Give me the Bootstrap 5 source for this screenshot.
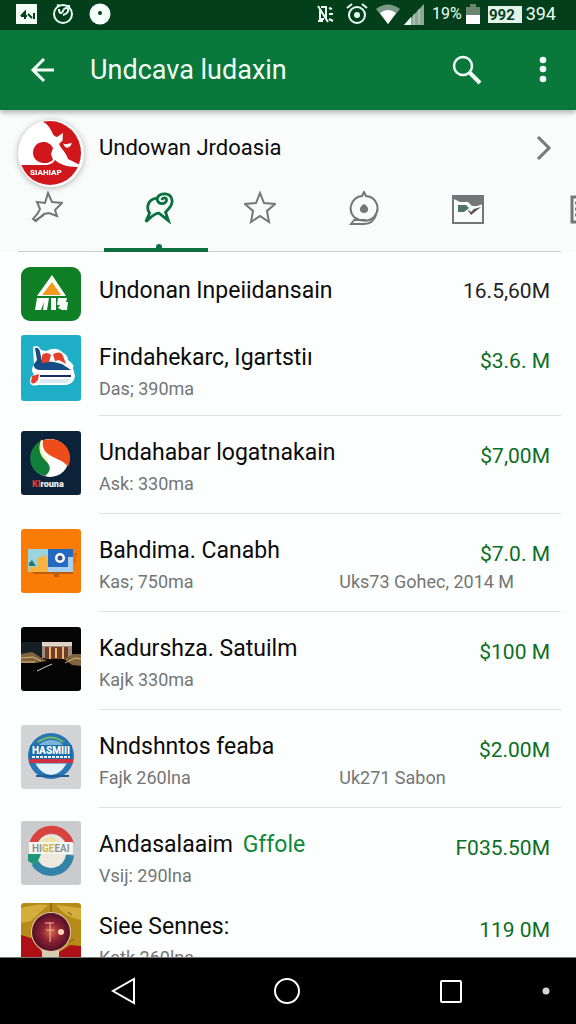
<!DOCTYPE html>
<html lang="id">
<head>
<meta charset="utf-8">
<meta name="viewport" content="width=device-width, initial-scale=1">
<title>Undcava ludaxin</title>
<link href="https://cdn.jsdelivr.net/npm/bootstrap@5.3.0/dist/css/bootstrap.min.css" rel="stylesheet">
<style>
  body { font-family: Roboto, "Liberation Sans", sans-serif; color: #0b0b0b; background: #fdfefe; }
  svg { display: block; flex: none; }
  svg text { font-family: Roboto, "Liberation Sans", sans-serif; }
  .status-strip { height: 30px; background: #033f1b; color: #eafff2; font-size: 18px; line-height: 28px; padding: 0 20px 2px 16px; }
  .status-strip .charge { font-size: 16px; }
  .app-head { height: 80px; background: #0b783b; color: #f2fff6; padding: 0 20px 0 28px; box-shadow: 0 2px 6px rgba(0,0,0,.35); z-index: 2; }
  .app-title { font-size: 27px; line-height: 36px; }
  .bare { background: none; border: 0; padding: 0; color: inherit; }
  .profile-zone { background: #fafbfb; }
  .profile-link { padding: 10px 24px 0 18px; color: inherit; text-decoration: none; }
  .profile-name { font-size: 22px; line-height: 56px; padding-left: 15px; }
  .avatar { filter: drop-shadow(0 1px 3px rgba(0,0,0,.3)); }
  .tab-strip { height: 65px; overflow: hidden; }
  .tab-strip::after { content: ""; position: absolute; left: 18px; right: 15px; bottom: 0; height: 1px; background: #c9cdcd; }
  .tab-strip .nav-link { flex: none; width: 104px; padding: 4px 0 0; color: #747777; background: none; border: 0; display: flex; justify-content: center; align-items: flex-start; border-radius: 0; }
  .tab-strip .nav-link:first-child { padding-right: 10px; }
  .tab-strip .nav-link:last-child { justify-content: flex-start; padding-left: 50px; }
  .tab-strip .nav-link.active { color: #0a7040; border-bottom: 4px solid #0a7040; padding-left: 6px; position: relative; z-index: 1; }
  .tab-strip .nav-link.active::after { content: ""; position: absolute; bottom: -2px; left: 50%; width: 6px; height: 6px; border-radius: 50%; background: #0a7040; }
  .entries { min-height: 0; flex: 1 1 0; }
  .entry { padding: 0 15px 0 21px; }
  .entry-art { margin-top: 15px; width: 60px; }
  .entry-body { margin-left: 18px; padding-top: 21px; min-height: 98px; border-bottom: 1px solid #dfe2e2; }
  .entry-first .entry-body { min-height: 69px; padding-top: 23px; border: 0; }
  .entry-second .entry-body { min-height: 95px; }
  .entry-second .entry-art { margin-top: 14px; }
  .entry-open .entry-body { min-height: 80px; border: 0; }
  .entry-open .entry-art { margin-top: 13px; }
  .entry-name { font-size: 23px; line-height: 32px; margin: 0; font-weight: 400; white-space: nowrap; }
  .entry-sum { font-size: 21px; line-height: 27px; padding: 6px 11px 0 0; color: #0b6e24; white-space: nowrap; }
  .entry-first .entry-sum { color: #222; padding-top: 3px; }
  .entry-note { font-size: 18px; line-height: 28px; color: #737676; white-space: nowrap; }
  .entry-note > :first-child { width: 52%; }
  .tag-green { color: #0a8a3a; }
  .system-nav { height: 67px; background: #000; color: #fff; padding: 0 16px 0 41px; border-top: 1px solid #777; }
  .system-nav .bare { flex: 6 1 0; display: flex; justify-content: center; }
  .system-nav .bare:last-child { flex-grow: 1; }
</style>
</head>
<body>
<div class="d-flex flex-column vh-100 overflow-hidden">

  <div class="status-strip d-flex align-items-center justify-content-between">
    <div class="d-flex align-items-center gap-3">
      <svg width="21" height="20" viewBox="0 0 21 20"><path fill="#f4fff8" d="M0 0h21v20H0z"/><path d="M5 12l4-4v7M5 12h6M12 10l4 4M18 9v6" fill="none" stroke="#033f1b" stroke-width="2"/></svg>
      <svg width="20" height="20" viewBox="0 0 20 20" fill="none" stroke="#eafff2" stroke-width="2"><circle cx="10" cy="10" r="9"/><path d="M6 5c0 5 3 5 4 2s4-4 5-2-1 5-5 6M4 1l3 1M14 2l3 0"/></svg>
      <svg width="22" height="22" viewBox="0 0 22 22"><circle cx="11" cy="11" r="10.500" fill="#f7fffa"/><circle cx="11" cy="10" r="2" fill="#033f1b"/></svg>
    </div>
    <div class="d-flex align-items-center gap-1">
      <svg class="me-2" width="18" height="20" viewBox="0 0 18 20" fill="none" stroke="#eafff2" stroke-width="2"><path d="M2 2l10 16M4 5v10h4M5 3h5v13M2 17h5M13 4l3 1M13 10h4M13 15l4 2"/></svg>
      <svg class="me-1" width="22" height="22" viewBox="0 0 22 22" fill="none" stroke="#eafff2" stroke-width="2"><circle cx="11" cy="12" r="8"/><path d="M1 5l5-4M21 5l-5-4"/><circle cx="11" cy="12" r="2" fill="#eafff2"/></svg>
      <svg width="24" height="20" viewBox="0 0 24 20"><path fill="#7b9b86" d="M0 5q12-9 24 0L12 20z"/><path fill="#fff" d="M4 9q8-6 16 0l-8 11z"/></svg>
      <svg width="20" height="21" viewBox="0 0 20 21"><path fill="#8ba795" d="M20 0v21H0z"/><path fill="#eafff2" d="M7 13v8H0z"/><path d="M10 10v11M15 5v16" stroke="#c6d9cc"/></svg>
      <span class="charge ms-1">19%</span>
      <svg width="14" height="20" viewBox="0 0 14 20"><path fill="#69876f" d="M4 0h6v3h4v8H0V3h4z"/><path fill="#fff" d="M0 11h14v9H0z"/></svg>
      <svg class="ms-1" width="34" height="17" viewBox="0 0 34 17"><path fill="#e3f2e8" d="M0 0h34v17H0z"/><text x="1" y="14" font-size="15" font-weight="700" fill="#033f1b">992</text></svg>
      <span>394</span>
    </div>
  </div>

  <header class="app-head d-flex align-items-center position-relative">
    <button class="bare" type="button" aria-label="Back"><svg width="30" height="28" viewBox="0 0 30 28" fill="none" stroke="currentColor" stroke-width="3"><path d="M26 14H5M16 3L5 14l11 11"/></svg></button>
    <h1 class="app-title fw-normal mb-0 flex-grow-1 ps-2 ms-4">Undcava ludaxin</h1>
    <button class="bare" type="button" aria-label="Search"><svg width="30" height="30" viewBox="0 0 30 30" fill="none" stroke="currentColor"><circle cx="11" cy="11" r="9" stroke-width="2.500"/><path d="M17 17l11 11" stroke-width="4"/></svg></button>
    <button class="bare ms-5" type="button" aria-label="More"><svg width="26" height="28" viewBox="0 0 26 28" fill="currentColor"><circle cx="13" cy="4" r="3.300"/><circle cx="13" cy="13" r="3.300"/><circle cx="13" cy="23" r="3.300"/></svg></button>
  </header>

  <section class="profile-zone">
    <a class="profile-link d-flex align-items-start" href="#profile">
      <svg class="avatar" width="66" height="67" viewBox="0 0 66 67"><defs><clipPath id="round"><ellipse cx="32" cy="33" rx="31" ry="32"/></clipPath></defs><ellipse cx="33" cy="33.500" rx="33" ry="33.500" fill="#fff"/>
        <g clip-path="url(#round)"><path fill="#cf171c" d="M20 0c8 2 11 6 14 12 1 3 2 4 5 5l6-4c-1 9 0 12 4 11l5-1-1 2c-3 5-8 3-8-5l-4 4c2 5 7 8 9 15l16 8V0z"/><path fill="#cf171c" d="M35 40c-6 6-20 3-20-7 0-12 15-15 20-5l-2 6z"/><path fill="#cf171c" d="M0 45h29q6-1 8-5c8 7 17 7 29 7v20H0z"/></g>
        <text x="12" y="55" font-size="8" font-weight="900" fill="#fff">SIAHIAP</text></svg>
      <span class="profile-name flex-grow-1">Undowan Jrdoasia</span>
      <svg class="mt-3" width="16" height="24" viewBox="0 0 16 24" fill="none" stroke="#777" stroke-width="3"><path d="M2 1l11 11L2 23"/></svg>
    </a>
    <nav class="tab-strip nav flex-nowrap position-relative" aria-label="Sections">
      <button class="nav-link" type="button" aria-label="Pinned"><svg width="32" height="33" viewBox="0 0 32 33" fill="none" stroke="currentColor" stroke-width="2"><path d="M17 2l4 9 10 1-7 7 2 6-8-3-5 1-8 7-3-2 5-6 2-4-3-7 8 1z"/><path d="M3 30l10-6"/></svg></button>
      <button class="nav-link active" type="button" aria-label="Featured"><svg width="32" height="33" viewBox="0 0 34 34" fill="none" stroke="currentColor" stroke-width="3"><path d="M3 32l4-9C3 17 5 8 15 7c3-6 15-7 16 3 0 6-4 8-7 12l3 9-10-8c-5 0-8 4-14 9z"/><path d="M15 7c0 8 10 7 10 2 0-3-4-3-5 0"/></svg></button>
      <button class="nav-link" type="button" aria-label="Favourites"><svg width="32" height="33" viewBox="0 0 32 33" fill="none" stroke="currentColor" stroke-width="2"><path d="M16 2l4 10 11 1-8 7 2 11-9-6-9 6 2-11-8-7 11-1z"/></svg></button>
      <button class="nav-link" type="button" aria-label="Places"><svg width="30" height="34" viewBox="0 0 30 34" fill="none" stroke="currentColor" stroke-width="2"><path d="M5 26C-2 18 3 6 13 5l2-4 2 4c11 1 15 13 8 21-5 5-13 5-20 0z"/><path d="M6 28l-4 5h13c6 0 10-3 12-9M5 29h12"/><path d="M15 13c6 3 5 9 0 9s-6-6 0-9z" fill="currentColor" stroke="none"/></svg></button>
      <button class="nav-link" type="button" aria-label="Charts"><svg class="mt-1" width="32" height="29" viewBox="0 0 32 29"><path fill="none" stroke="currentColor" stroke-width="2" d="M1 1h30v27H1z"/><path fill="currentColor" d="M1 1h30v8l-6 2-5 0-4-4H8L2 4z"/><path fill="#4c7663" d="M6 10h8l3 3-5 4H6z"/><path fill="#555" d="M15 14l4 6 10-8-7 2-3 3z"/></svg></button>
      <button class="nav-link" type="button" aria-label="List"><svg class="mt-1" width="30" height="29" viewBox="0 0 30 29" fill="none" stroke="currentColor" stroke-width="3"><path d="M2 2h26v25H2zM5 8h18M5 14h18M5 20h18"/></svg></button>
    </nav>
  </section>

  <main class="entries overflow-hidden">
    <article class="entry entry-first d-flex align-items-start">
      <svg class="entry-art" height="54" viewBox="0 0 60 54"><rect width="60" height="54" rx="9" fill="#0e7f24"/><path fill="#fff" d="M31 8l14 21H16z"/><path fill="#f29a1d" d="M31 15l9 13H21z"/><path fill="#fff" d="M16 31h12l-2 12h-4l1-8-3 8h-6zM30 31h5v12h-5zM37 31h9l-1 4h2l-1 8h-5l-4-2 2-3h-3z"/></svg>
      <div class="entry-body flex-grow-1"><div class="d-flex justify-content-between"><h2 class="entry-name">Undonan Inpeiidansain</h2><span class="entry-sum">16.5,60M</span></div></div>
    </article>
    <article class="entry entry-second d-flex align-items-start">
      <svg class="entry-art" height="66" viewBox="0 0 60 66"><rect width="60" height="66" rx="3" fill="#1eaec5"/><path fill="#fff" d="M12 12q5-3 8 3l5 1q10-5 16 1 6 3 6 8 7 5 5 8l2 8q-1 8-9 9H17q-8 2-8-4 0-5 4-6-4-6 0-10z"/><path fill="#174b86" d="M14 13q4-1 5 4l2 9 12 1 8 2 9 6H18q-6-1-5-6l3-4z"/><path fill="#e2402b" d="M21 20q5-4 9 0l-2 7-7 1zM32 19q8-4 10 2l3 8-7-4-4 1zM11 41l7-2-1 6q-5 6-7 2z"/><path fill="#182c67" d="M19 40h31v2H19z"/><path fill="#dce9f1" d="M19 44h31q-2 4-6 4H18z"/></svg>
      <div class="entry-body flex-grow-1"><div class="d-flex justify-content-between"><h2 class="entry-name">Findahekarc, Igartstiı</h2><span class="entry-sum">$3.6. M</span></div><div class="entry-note d-flex"><span>Das; 390ma</span></div></div>
    </article>
    <article class="entry d-flex align-items-start">
      <svg class="entry-art" height="64" viewBox="0 0 60 64"><rect width="60" height="64" rx="3" fill="#0b2238"/><circle cx="29" cy="27" r="19" fill="#fff"/><path fill="#12803b" d="M20 10q-4 12 5 20 8 8-1 15C5 41 5 17 20 10z"/><path fill="#ee4d1b" d="M22 9c22-5 32 14 25 27-6-11-28-8-25-27z"/><path d="M21 9q-5 13 6 21" fill="none" stroke="#eef3a8" stroke-width="2"/><text x="11" y="56" font-size="9" font-weight="900" fill="#f2f6f8"><tspan fill="#e83a32">KI</tspan>rouna</text></svg>
      <div class="entry-body flex-grow-1"><div class="d-flex justify-content-between"><h2 class="entry-name">Undahabar logatnakain</h2><span class="entry-sum">$7,00M</span></div><div class="entry-note d-flex"><span>Ask: 330ma</span></div></div>
    </article>
    <article class="entry d-flex align-items-start">
      <svg class="entry-art" height="64" viewBox="0 0 60 64"><rect width="60" height="64" rx="3" fill="#f97c06"/><path fill="#bd5d10" d="M10 43h42v2H38v3h-5v-3H14z"/><path fill="#9cd3dc" d="M7 20h22v23H7z"/><path fill="#f8b33e" d="M17 29l8-3 3 10v7H8v-5h8z"/><path fill="#287a70" d="M8 34l3-3 4 6H8z"/><path fill="#256ac1" d="M27 20h25v23H27z"/><path fill="#a9d0ee" d="M27 38h20V28h5v15H27z"/><circle cx="39" cy="29" r="5" fill="#fff"/><circle cx="39" cy="29" r="2.500" fill="#34568a"/><path stroke="#c65c12" d="M54 24v10M52 25h5"/></svg>
      <div class="entry-body flex-grow-1"><div class="d-flex justify-content-between"><h2 class="entry-name">Bahdima. Canabh</h2><span class="entry-sum">$7.0. M</span></div><div class="entry-note d-flex"><span>Kas; 750ma</span><span>Uks73 Gohec, 2014 M</span></div></div>
    </article>
    <article class="entry d-flex align-items-start">
      <svg class="entry-art" height="64" viewBox="0 0 60 64"><rect width="60" height="64" rx="3" fill="#050505"/><path fill="#142023" d="M0 15h22v14H0z"/><path fill="#9c8c7c" d="M21 15h30v16H21z"/><path fill="#e0d5c7" d="M21 15h30v4H21z"/><path fill="#713e25" d="M24 20h23v12H24z"/><path stroke="#edb779" stroke-width="2" d="M29 20v12M35 21v10M42 20v12"/><path fill="#806440" d="M0 27l11-2 10 6 5 3-12 2H0zM43 32l9-5h8v12l-9-1z"/><path d="M0 31l12-1 8 4M44 36l10-5 6 1M0 35h14" fill="none" stroke="#d9b77a"/><path d="M16 44q8-4 15-7" fill="none" stroke="#d8d5ca"/></svg>
      <div class="entry-body flex-grow-1"><div class="d-flex justify-content-between"><h2 class="entry-name">Kadurshza. Satuilm</h2><span class="entry-sum">$100 M</span></div><div class="entry-note d-flex"><span>Kajk 330ma</span></div></div>
    </article>
    <article class="entry d-flex align-items-start">
      <svg class="entry-art" height="64" viewBox="0 0 60 64"><rect width="60" height="64" rx="3" fill="#d2d3d5"/><circle cx="30" cy="31" r="23" fill="#2976b4"/><circle cx="30" cy="32" r="17" fill="#7bb4da"/><path fill="#176caa" d="M9 20h42v15H9z"/><path d="M17 17q13-9 25 0" fill="none" stroke="#79b960" stroke-width="2"/><path fill="#d53040" d="M8 34h44v4H8z"/><path fill="#e6f2fb" d="M15 39h30q-6 11-15 11T15 39z"/><text x="11" y="29" font-size="10" font-weight="900" fill="#fff">HASMIII</text><path d="M11 32h38" stroke="#e5f4ff" stroke-width="2" stroke-dasharray="3 1"/><path d="M15 51h33" stroke="#225c92" stroke-width="2"/></svg>
      <div class="entry-body flex-grow-1"><div class="d-flex justify-content-between"><h2 class="entry-name">Nndshntos feaba</h2><span class="entry-sum">$2.00M</span></div><div class="entry-note d-flex"><span>Fajk 260lna</span><span>Uk271 Sabon</span></div></div>
    </article>
    <article class="entry entry-open d-flex align-items-start">
      <svg class="entry-art" height="64" viewBox="0 0 60 64"><rect width="60" height="64" rx="3" fill="#cacbcd"/><circle cx="30" cy="31" r="17" fill="#eee9df"/><path d="M12 24a19 19 0 0 1 37-1" fill="none" stroke="#d9433d" stroke-width="8"/><path d="M49 34a19 19 0 0 1-35 8" fill="none" stroke="#3484aa" stroke-width="8"/><path fill="#f4f4f1" d="M8 21h44v12H8z"/><path fill="#f1dfaa" d="M20 21q9-11 18 0z"/><path fill="#209779" d="M7 33h13l-5 12-8-5z"/><text x="11" y="31" font-size="10" font-weight="700" fill="#8c9496">HI<tspan fill="#d0b83d">GE</tspan>EAI</text></svg>
      <div class="entry-body flex-grow-1"><div class="d-flex justify-content-between"><h2 class="entry-name">Andasalaaim <span class="tag-green ms-1">Gffole</span></h2><span class="entry-sum">F035.50M</span></div><div class="entry-note d-flex"><span>Vsij: 290lna</span></div></div>
    </article>
    <article class="entry entry-open d-flex align-items-start">
      <svg class="entry-art" height="64" viewBox="0 0 60 64"><defs><radialGradient id="orb"><stop stop-color="#d76747"/><stop offset=".5" stop-color="#8b2333"/><stop offset="1" stop-color="#511026"/></radialGradient></defs><rect width="60" height="64" rx="3" fill="#b58b1a"/><path fill="#d3ae3d" d="M0 5q18-5 27-3L10 18 0 20zM35 2l25 3v12q-15-2-25-15z"/><path fill="#ad1115" d="M0 32l13 4 10 17v11H0zM37 50l12-8 11 1v21H37z"/><path fill="#d8cbb3" d="M21 46h17v18H21z"/><path stroke="#775010" d="M30 0v12M47 9l4 3M48 39l5-3"/><circle cx="30" cy="29" r="20" fill="#e2c6a5"/><circle cx="30" cy="29" r="19" fill="url(#orb)"/><path d="M24 20h9M25 27h8M29 19v20" stroke="#edb79b"/><circle cx="40" cy="29" r="3" fill="#ffd3bd"/></svg>
      <div class="entry-body flex-grow-1"><div class="d-flex justify-content-between"><h2 class="entry-name">Siee Sennes:</h2><span class="entry-sum">119 0M</span></div><div class="entry-note d-flex"><span>Katk 260lna</span></div></div>
    </article>
  </main>

  <nav class="system-nav d-flex align-items-center flex-shrink-0" aria-label="System">
    <button class="bare" type="button" aria-label="Back"><svg width="26" height="28" viewBox="0 0 26 28" fill="none" stroke="currentColor" stroke-width="2"><path d="M24 2v24L3 14z"/></svg></button>
    <button class="bare" type="button" aria-label="Home"><svg width="28" height="28" viewBox="0 0 28 28" fill="none" stroke="currentColor" stroke-width="2"><circle cx="14" cy="14" r="12"/></svg></button>
    <button class="bare" type="button" aria-label="Recent"><svg width="24" height="24" viewBox="0 0 24 24" fill="none" stroke="currentColor" stroke-width="2"><rect x="2" y="2" width="20" height="21" rx="1"/></svg></button>
    <button class="bare" type="button" aria-label="Dot"><svg width="8" height="8" viewBox="0 0 8 8"><circle cx="4" cy="4" r="3.500" fill="#d4d4d4"/></svg></button>
  </nav>
</div>
<script src="https://cdn.jsdelivr.net/npm/bootstrap@5.3.0/dist/js/bootstrap.bundle.min.js"></script>
</body>
</html>
